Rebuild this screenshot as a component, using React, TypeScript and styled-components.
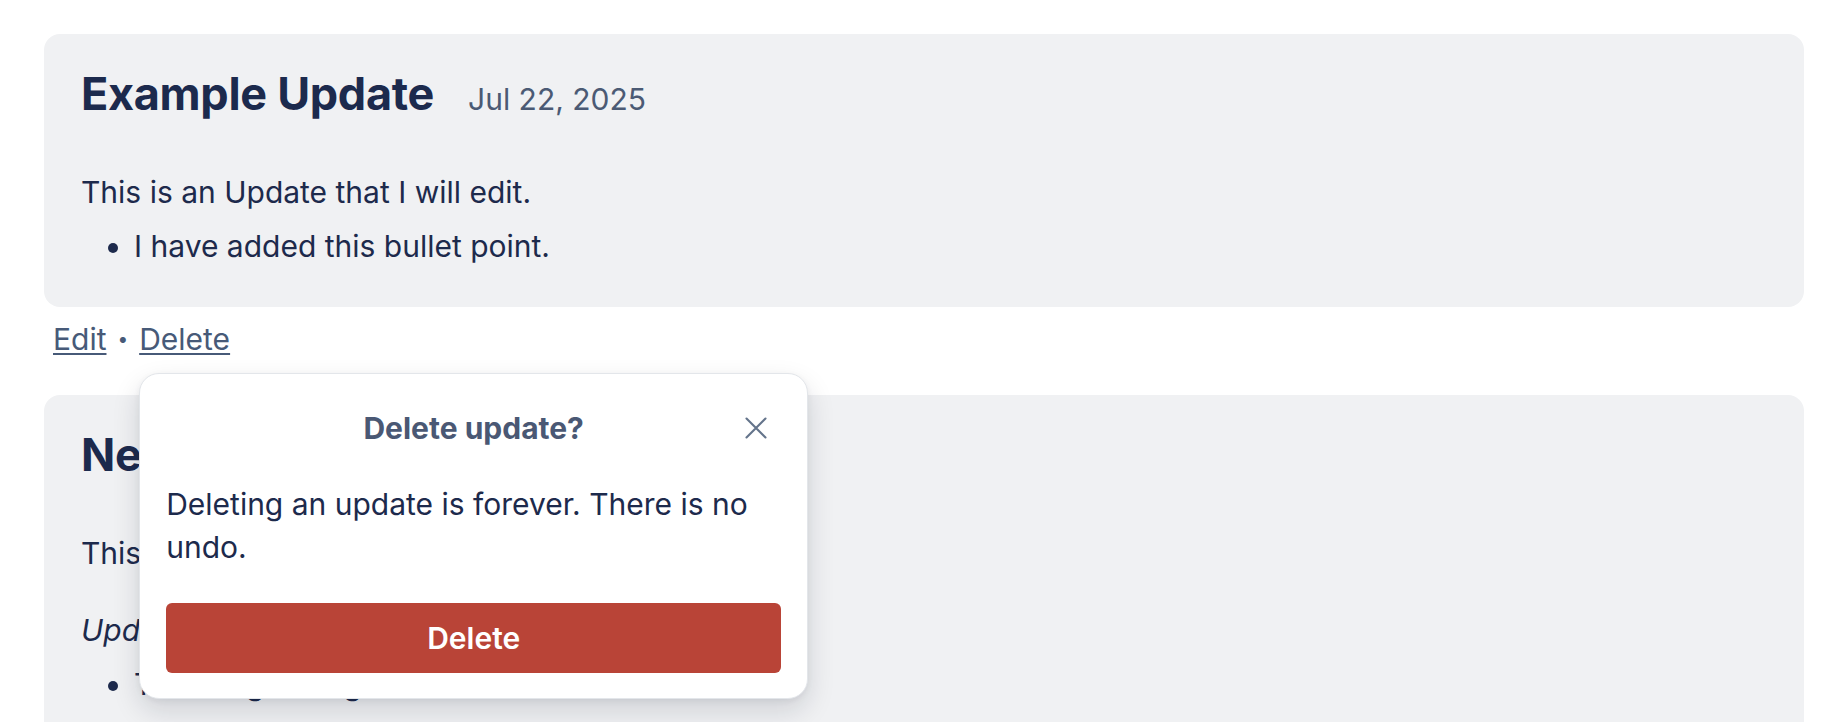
import styled, { createGlobalStyle } from "styled-components";

const GlobalStyle = createGlobalStyle`
  * {
    box-sizing: border-box;
  }
  body {
    margin: 0;
    background: #ffffff;
    font-family: Inter, "Noto Sans", sans-serif;
    color: #1d2a4c;
  }
`;

const CloseIcon = () => (
  <svg width="22" height="22" viewBox="0 0 22 22" fill="none">
    <path
      d="M1.5 1.5l19 19M20.5 1.5l-19 19"
      stroke="currentColor"
      strokeWidth="2.1"
      strokeLinecap="round"
    />
  </svg>
);

const App = () => {
  return (
    <Page>
      <GlobalStyle />
      <Card>
        <Header>
          <Title>Example Update</Title>
          <DateLabel>Jul 22, 2025</DateLabel>
        </Header>
        <Body>
          <p>This is an Update that I will edit.</p>
          <ul>
            <li>I have added this bullet point.</li>
          </ul>
        </Body>
      </Card>

      <Actions>
        <ActionLink href="#">Edit</ActionLink>
        <Dot>•</Dot>
        <Anchor>
          <ActionLink href="#">Delete</ActionLink>
          <Popover role="dialog">
            <PopHeader>
              <span />
              <PopTitle>Delete update?</PopTitle>
              <CloseButton aria-label="Close">
                <CloseIcon />
              </CloseButton>
            </PopHeader>
            <PopText>Deleting an update is forever. There is no undo.</PopText>
            <DangerButton>Delete</DangerButton>
          </Popover>
        </Anchor>
      </Actions>

      <Card>
        <Header>
          <Title>New Features</Title>
          <DateLabel>Jul 15, 2025</DateLabel>
        </Header>
        <Body>
          <p>This is our first update.</p>
          <p>
            <em>Updated on Jul 16:</em>
          </p>
          <ul>
            <li>The list got longer.</li>
          </ul>
        </Body>
      </Card>
    </Page>
  );
};

export default App;

const Page = styled.main`
  padding: 34px 32px 0 44px;
  height: 722px;
  overflow: hidden;
`;

const Card = styled.article`
  background: #f0f1f3;
  border-radius: 16px;
  padding: 34px 37px 39px;
`;

const Header = styled.header`
  display: flex;
  align-items: baseline;
  gap: 34px;
`;

const Title = styled.h2`
  margin: 0;
  font-size: 45px;
  font-weight: 700;
  line-height: 52px;
  letter-spacing: -0.3px;
  color: #1c2a4d;
`;

const DateLabel = styled.span`
  font-size: 30px;
  color: #4b5a74;
`;

const Body = styled.div`
  margin-top: 51px;
  font-size: 30px;
  line-height: 43px;

  p {
    margin: 0;
  }
  p + p {
    margin-top: 34px;
  }
  ul {
    margin: 11px 0 0;
    padding-left: 53px;
  }
`;

const Actions = styled.div`
  display: flex;
  align-items: center;
  padding: 11px 0 34px 9px;
  font-size: 30px;
  line-height: 43px;
  color: #475a78;
`;

const ActionLink = styled.a`
  color: inherit;
  text-decoration: underline;
  text-decoration-thickness: 2px;
  text-underline-offset: 3px;
`;

const Dot = styled.span`
  margin: 0 11px;
  font-size: 19px;
`;

const Anchor = styled.span`
  position: relative;
`;

const Popover = styled.div`
  position: absolute;
  top: calc(100% + 12px);
  left: 0;
  z-index: 10;
  width: 669px;
  background: #ffffff;
  border: 1px solid #e3e6ea;
  border-radius: 20px;
  padding: 33px 26px 25px;
  box-shadow: 0 12px 28px rgba(15, 23, 42, 0.14), 0 2px 6px rgba(15, 23, 42, 0.06);
  color: #1d2a4c;
`;

const PopHeader = styled.div`
  display: grid;
  grid-template-columns: 1fr auto 1fr;
  align-items: center;
  height: 42px;
`;

const PopTitle = styled.h3`
  margin: 0;
  font-size: 30px;
  font-weight: 700;
  line-height: 42px;
  color: #4a5874;
`;

const CloseButton = styled.button`
  justify-self: end;
  display: flex;
  align-items: center;
  justify-content: center;
  width: 40px;
  height: 40px;
  margin-right: 5px;
  padding: 0;
  border: none;
  background: none;
  color: #64748b;
  cursor: pointer;
`;

const PopText = styled.p`
  margin: 34px 0 0;
  font-size: 30px;
  line-height: 43px;
`;

const DangerButton = styled.button`
  display: block;
  width: 100%;
  height: 70px;
  margin-top: 34px;
  border: none;
  border-radius: 6px;
  background: #b94437;
  color: #ffffff;
  font-family: inherit;
  font-size: 30px;
  font-weight: 600;
  cursor: pointer;
`;
